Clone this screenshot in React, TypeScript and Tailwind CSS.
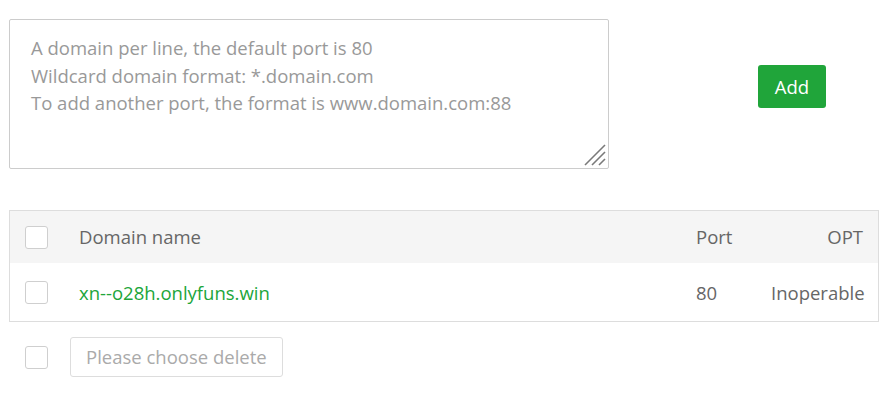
import React from 'react';

const Checkbox = () => (
  <span className="block h-[23px] w-[23px] shrink-0 rounded-[3px] border border-[#cfcfcf] bg-white" />
);

const Grip = () => (
  <svg className="pointer-events-none absolute bottom-[3px] right-[3px]" width="22" height="22" viewBox="0 0 22 22" stroke="#7a7a7a" strokeWidth="1.6">
    <line x1="21" y1="1" x2="1" y2="21" />
    <line x1="21" y1="8" x2="8" y2="21" />
    <line x1="21" y1="15" x2="15" y2="21" />
  </svg>
);

const rows = [{ domain: 'xn--o28h.onlyfuns.win', port: 80 }];

export default function App() {
  return (
    <div className="h-[402px] w-[896px] bg-white font-['Open_Sans',sans-serif] text-[#666]">
      <div className="flex items-start pl-[9px] pt-[19px]">
        <div className="relative">
          <textarea
            className="block h-[150px] w-[600px] resize-none rounded-[2px] border border-[#ccc] px-[21px] py-[14px] text-[18.5px] leading-[27.5px] text-[#666] outline-none placeholder:text-[#999]"
            placeholder={'A domain per line, the default port is 80\nWildcard domain format: *.domain.com\nTo add another port, the format is www.domain.com:88'}
          />
          <Grip />
        </div>
        <button className="ml-[149px] mt-[46px] h-[43px] w-[68px] rounded-[3px] bg-[#20a53a] text-[18.5px] text-white">
          Add
        </button>
      </div>

      <div className="ml-[9px] mt-[41px] w-[870px] border border-[#ddd] text-[18.5px]">
        <div className="flex h-[52px] items-center bg-[#f5f5f5] pl-[15px] pr-[15px]">
          <Checkbox />
          <span className="ml-[31px] flex-1">Domain name</span>
          <span className="w-[75px]">Port</span>
          <span className="w-[92px] text-right">OPT</span>
        </div>
        {rows.map((r) => (
          <div key={r.domain} className="flex h-[58px] items-center border-t border-white pl-[15px] pr-[15px]">
            <Checkbox />
            <span className="ml-[31px] flex-1 text-[#20a53a]">{r.domain}</span>
            <span className="w-[75px]">{r.port}</span>
            <span className="w-[92px] text-right">Inoperable</span>
          </div>
        ))}
      </div>

      <div className="mt-[15px] flex items-center pl-[25px]">
        <Checkbox />
        <button className="ml-[22px] h-[40px] rounded-[3px] border border-[#ddd] bg-white px-[15px] text-[18.5px] text-[#aaa]">
          Please choose delete
        </button>
      </div>
    </div>
  );
}
